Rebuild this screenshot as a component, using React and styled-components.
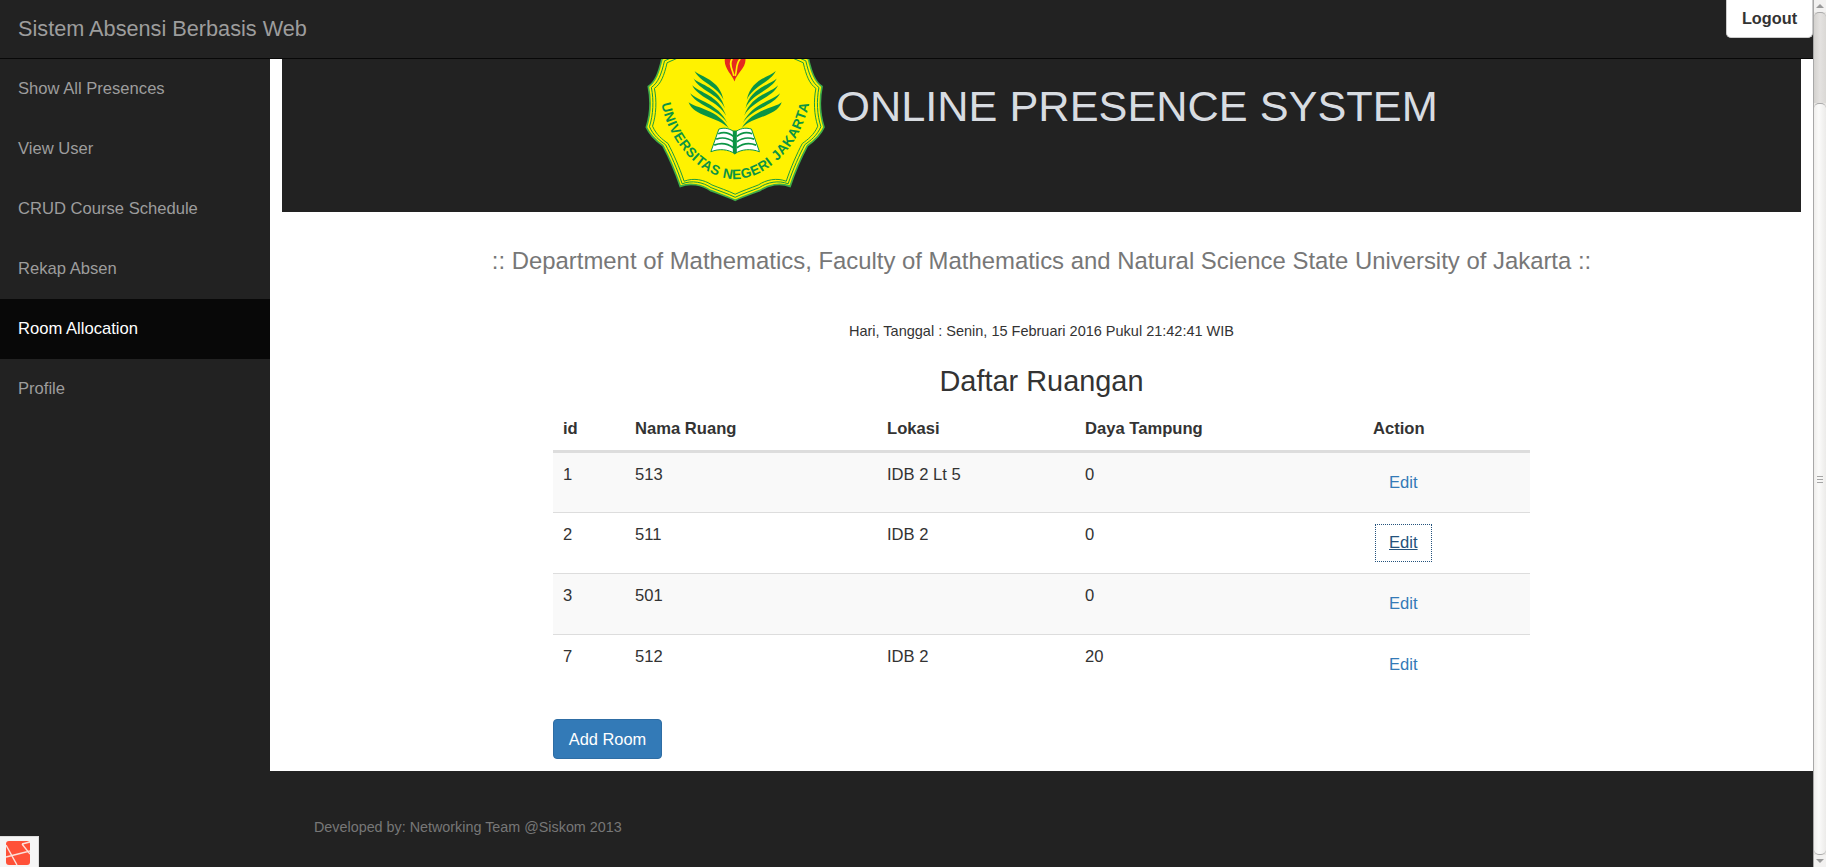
import React from "react";
import styled, { createGlobalStyle } from "styled-components";

const rooms = [
  { id: 1, nama: "513", lokasi: "IDB 2 Lt 5", daya: 0 },
  { id: 2, nama: "511", lokasi: "IDB 2", daya: 0, focused: true },
  { id: 3, nama: "501", lokasi: "", daya: 0 },
  { id: 7, nama: "512", lokasi: "IDB 2", daya: 20 },
];

const menu = [
  "Show All Presences",
  "View User",
  "CRUD Course Schedule",
  "Rekap Absen",
  "Room Allocation",
  "Profile",
];

const shield =
  "M347 -40 L567 57 C577 100 587 125 608 140 C600 180 602 225 614 262 C602 290 582 305 564 318 C547 350 527 395 512 440 C482 428 447 435 422 452 C397 462 372 470 347 482 C322 470 297 462 272 452 C247 435 212 428 182 440 C167 395 147 350 130 318 C112 305 92 290 80 262 C92 225 94 180 86 140 C107 125 117 100 127 57 Z";

const Leaves = () => (
  <g fill="#0b9444">
    <path d="M225 93 C245 112 300 118 312 180 C296 140 240 126 225 93Z" />
    <path d="M222 116 C240 135 300 142 316 205 C296 161 238 151 222 116Z" />
    <path d="M218 136 C238 158 298 165 320 228 C296 183 234 173 218 136Z" />
    <path d="M212 160 C232 182 296 190 324 250 C296 206 228 196 212 160Z" />
    <path d="M207 187 C228 205 296 208 328 266 C296 229 222 231 207 187Z" />
  </g>
);

const Logo = () => (
  <LogoSvg viewBox="70 -60 550 550" aria-hidden="true">
    <path d={shield} fill="#fff200" stroke="#3fae49" strokeWidth="5" />
    <g fill="none" stroke="#0b9444" strokeWidth="3">
      <path d={shield} transform="translate(347 220) scale(.965) translate(-347 -220)" />
      <path d={shield} transform="translate(347 220) scale(.93) translate(-347 -220)" />
    </g>
    <path
      d="M345 125 C338 105 312 85 316 57 L378 57 C380 85 352 100 345 125Z"
      fill="#e4291f"
    />
    <g fill="none" stroke="#fff200" strokeWidth="5">
      <path d="M338 57 C326 72 340 90 343 108" />
      <path d="M362 57 C348 72 354 88 347 108" />
    </g>
    <Leaves />
    <g transform="matrix(-1 0 0 1 694 0)">
      <Leaves />
    </g>
    <path
      d="M298 268 C315 262 332 266 346 278 C360 266 378 262 396 268 L420 336 C395 326 365 328 346 342 C326 328 298 326 274 336Z"
      fill="#fff"
      stroke="#0b9444"
      strokeWidth="3"
    />
    <g fill="none" stroke="#0b9444" strokeWidth="5">
      <path d="M296 282 C312 276 330 280 342 290 M290 298 C308 292 328 296 342 306 M284 316 C304 308 326 312 342 324" />
      <path d="M398 282 C382 276 364 280 352 290 M404 298 C386 292 366 296 352 306 M410 316 C390 308 368 312 352 324" />
    </g>
    <path d="M340 272 L352 272 L352 338 L346 344 L340 338Z" fill="#0b9444" />
    <path
      id="logoArc"
      d="M120 160 C138 315 252 418 347 418 C442 418 556 315 574 160"
      fill="none"
    />
    <LogoText>
      <textPath href="#logoArc" startOffset="50%" textAnchor="middle" textLength="680">
        UNIVERSITAS NEGERI JAKARTA
      </textPath>
    </LogoText>
  </LogoSvg>
);

const LaravelMark = () => (
  <svg width="24" height="24" viewBox="0 0 24 24" aria-hidden="true">
    <rect width="24" height="24" rx="3" fill="#ff5138" />
    <path
      d="M0 4 L11 24 M0 16 L24 10 M16 3 L24 1 M16 3 L24 13"
      stroke="#fbe3dc"
      strokeWidth="1.4"
      fill="none"
    />
  </svg>
);

const App = () => {
  return (
    <>
      <Global />
      <Shell>
        <Page>
          <Navbar>
            <Brand>Sistem Absensi Berbasis Web</Brand>
            <LogoutButton>Logout</LogoutButton>
          </Navbar>
          <Body>
            <Sidebar>
              {menu.map((item) => (
                <SideLink key={item} $active={item === "Room Allocation"}>
                  {item}
                </SideLink>
              ))}
            </Sidebar>
            <Content>
              <Panel>
                <Banner>
                  <Logo />
                  <BannerTitle>ONLINE PRESENCE SYSTEM</BannerTitle>
                </Banner>
                <Department>
                  :: Department of Mathematics, Faculty of Mathematics and Natural Science State
                  University of Jakarta ::
                </Department>
                <DateLine>Hari, Tanggal : Senin, 15 Februari 2016 Pukul 21:42:41 WIB</DateLine>
                <Heading>Daftar Ruangan</Heading>
                <TableWrap>
                  <RoomTable>
                    <colgroup>
                      <col width="72" />
                      <col width="252" />
                      <col width="198" />
                      <col width="288" />
                      <col width="167" />
                    </colgroup>
                    <thead>
                      <tr>
                        <Th>id</Th>
                        <Th>Nama Ruang</Th>
                        <Th>Lokasi</Th>
                        <Th>Daya Tampung</Th>
                        <Th>Action</Th>
                      </tr>
                    </thead>
                    <tbody>
                      {rooms.map((r) => (
                        <Row key={r.id}>
                          <Td>{r.id}</Td>
                          <Td>{r.nama}</Td>
                          <Td>{r.lokasi}</Td>
                          <Td>{r.daya}</Td>
                          <Td>
                            <EditLink $focused={r.focused}>Edit</EditLink>
                          </Td>
                        </Row>
                      ))}
                    </tbody>
                  </RoomTable>
                  <AddButton>Add Room</AddButton>
                </TableWrap>
              </Panel>
              <Footer>Developed by: Networking Team @Siskom 2013</Footer>
            </Content>
          </Body>
        </Page>
        <Scrollbar>
          <ScrollArrow $up />
          <ScrollGap />
          <ScrollThumb>
            <Grip />
          </ScrollThumb>
          <ScrollArrow />
        </Scrollbar>
      </Shell>
      <DebugTab>
        <LaravelMark />
      </DebugTab>
    </>
  );
};

const Global = createGlobalStyle`
  html, body {
    margin: 0;
    height: 100%;
    overflow: hidden;
    background: #222;
  }
  * { box-sizing: border-box; }
`;

const Shell = styled.div`
  display: flex;
  height: 867px;
  font-family: "Liberation Sans", Arial, sans-serif;
  font-size: 16.6px;
  color: #333;
`;

const Page = styled.div`
  flex: 1;
  min-width: 0;
  display: flex;
  flex-direction: column;
  background: #222;
`;

const Navbar = styled.header`
  height: 59px;
  flex: none;
  display: flex;
  justify-content: space-between;
  align-items: flex-start;
  padding-left: 18px;
  border-bottom: 1px solid #080808;
`;

const Brand = styled.div`
  font-size: 21.7px;
  line-height: 57px;
  color: #9d9d9d;
`;

const LogoutButton = styled.button`
  width: 87px;
  height: 38px;
  padding: 0;
  background: #fff;
  border: 1px solid #ccc;
  border-top: 0;
  border-radius: 0 0 5px 5px;
  font: bold 16.3px "Liberation Sans", Arial, sans-serif;
  color: #333;
`;

const Body = styled.div`
  flex: 1;
  display: flex;
  min-height: 0;
`;

const Sidebar = styled.nav`
  width: 270px;
  flex: none;
`;

const SideLink = styled.a`
  display: block;
  height: 60px;
  padding-left: 18px;
  line-height: 60px;
  color: ${(p) => (p.$active ? "#fff" : "#9d9d9d")};
  background: ${(p) => (p.$active ? "#080808" : "transparent")};
`;

const Content = styled.main`
  flex: 1;
  min-width: 0;
`;

const Panel = styled.section`
  height: 712px;
  background: #fff;
  padding: 0 12px;
`;

const Banner = styled.div`
  height: 153px;
  padding-right: 2px;
  background: #222;
  overflow: hidden;
  display: flex;
  justify-content: center;
  align-items: flex-start;
  gap: 10px;
`;

const LogoSvg = styled.svg`
  width: 183px;
  height: 183px;
  margin-top: -39px;
  flex: none;
`;

const LogoText = styled.text`
  font: bold 41px "Liberation Sans", Arial, sans-serif;
  fill: #0b9444;
`;

const BannerTitle = styled.h1`
  margin: 19px 0 0;
  font-size: 43.3px;
  line-height: 56px;
  font-weight: 400;
  color: #d8dce1;
`;

const Department = styled.h4`
  margin: 35px 0 0;
  font-size: 23.9px;
  line-height: 28px;
  font-weight: 400;
  color: #777;
  text-align: center;
`;

const DateLine = styled.p`
  margin: 46px 0 0;
  font-size: 14.5px;
  line-height: 20px;
  text-align: center;
`;

const Heading = styled.h3`
  margin: 22px 0 0;
  font-size: 28.9px;
  line-height: 36px;
  font-weight: 400;
  text-align: center;
`;

const TableWrap = styled.div`
  width: 977px;
  margin: 9px 0 0 271px;
`;

const RoomTable = styled.table`
  width: 977px;
  table-layout: fixed;
  border-collapse: collapse;
`;

const Th = styled.th`
  height: 43px;
  padding: 0 10px;
  text-align: left;
  font-weight: 700;
  border-bottom: 3px solid #ddd;
`;

const Row = styled.tr`
  height: 61px;
  border-bottom: 1px solid #ddd;
  &:nth-child(odd) {
    background: #f9f9f9;
  }
  &:last-child {
    border-bottom: 0;
  }
`;

const Td = styled.td`
  padding: 10px;
  vertical-align: top;
  line-height: 23px;
`;

const EditLink = styled.a`
  display: inline-block;
  padding: 6px 13.5px;
  line-height: 24px;
  margin: 2px 0 0 2.5px;
  color: ${(p) => (p.$focused ? "#23527c" : "#337ab7")};
  text-decoration: ${(p) => (p.$focused ? "underline" : "none")};
  outline: ${(p) => (p.$focused ? "1.5px dotted #23527c" : "none")};
`;

const AddButton = styled.button`
  display: block;
  width: 109px;
  height: 40px;
  margin-top: 24px;
  padding: 0;
  background: #337ab7;
  border: 1px solid #2e6da4;
  border-radius: 4px;
  color: #fff;
  font: 16.4px "Liberation Sans", Arial, sans-serif;
`;

const Footer = styled.footer`
  padding: 46px 0 0 44px;
  font-size: 14.35px;
  line-height: 20px;
  color: #777;
`;

const Scrollbar = styled.div`
  width: 13px;
  flex: none;
  display: flex;
  flex-direction: column;
  background: #e8e6e3;
  border-left: 1px solid #a8a8a8;
`;

const ScrollArrow = styled.div`
  height: 12px;
  flex: none;
  position: relative;
  background: #f2f1f0;
  &::after {
    content: "";
    position: absolute;
    left: 2px;
    top: 4px;
    border-left: 4px solid transparent;
    border-right: 4px solid transparent;
    ${(p) => (p.$up ? "border-bottom: 4px solid #9a9a9a;" : "border-top: 4px solid #9a9a9a;")}
  }
`;

const ScrollGap = styled.div`
  height: 91px;
  flex: none;
  background: linear-gradient(90deg, #d3d1ce, #e4e2e0 50%, #dad8d5);
  border-top: 1px solid #aaa;
  border-radius: 5px 5px 0 0;
`;

const ScrollThumb = styled.div`
  flex: 1;
  display: flex;
  align-items: center;
  justify-content: center;
  background: linear-gradient(90deg, #efeeec, #fbfbfa 40%, #ecebe9);
  border-top: 1px solid #aaa;
  border-bottom: 1px solid #aaa;
  border-radius: 5px;
`;

const Grip = styled.div`
  width: 6px;
  height: 7px;
  background: repeating-linear-gradient(180deg, #a5a5a5 0 1px, transparent 1px 3px);
`;

const DebugTab = styled.div`
  position: fixed;
  left: 0;
  bottom: 0;
  width: 39px;
  height: 31px;
  padding: 4px 0 0 6px;
  background: #f5f5f5;
  border-top: 1px solid #ddd;
  border-right: 1px solid #ddd;
`;

export default App;
